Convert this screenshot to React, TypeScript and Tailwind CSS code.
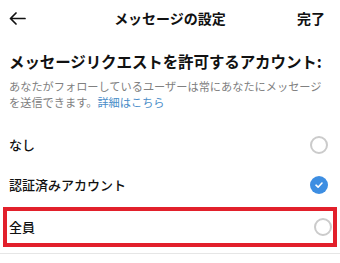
import { useState } from "react";

type Choice = "none" | "verified" | "everyone";

const options: { id: Choice; label: string }[] = [
  { id: "none", label: "なし" },
  { id: "verified", label: "認証済みアカウント" },
];

function Radio({ checked }: { checked: boolean }) {
  if (checked) {
    return (
      <span className="flex h-[18px] w-[18px] items-center justify-center rounded-full bg-[#3d8ee2]">
        <svg width="10" height="10" viewBox="0 0 10 10" fill="none">
          <path d="M2 5.2 L4.1 7.2 L8 3" stroke="white" strokeWidth="1.6" strokeLinecap="round" strokeLinejoin="round" />
        </svg>
      </span>
    );
  }
  return <span className="h-[18px] w-[18px] rounded-full border-[2px] border-[#cbcbcb]" />;
}

export default function App() {
  const [choice, setChoice] = useState<Choice>("verified");

  return (
    <div
      className="h-[263px] w-[340px] overflow-hidden bg-white text-[#111]"
      style={{ fontFamily: '"Noto Sans CJK JP", "Noto Sans", sans-serif' }}
    >
      {/* Header */}
      <div className="grid h-[36px] grid-cols-[1fr_auto_1fr] items-center px-[9px]">
        <svg width="17" height="13" viewBox="0 0 17 13" fill="none" className="justify-self-start">
          <path d="M16 6.5 H1.5 M7 1 L1.5 6.5 L7 12" stroke="#111" strokeWidth="1.7" strokeLinecap="round" strokeLinejoin="round" />
        </svg>
        <div className="text-[14px] font-bold leading-none">メッセージの設定</div>
        <div className="justify-self-end pr-[6px] text-[14px] font-bold leading-none">完了</div>
      </div>

      <div className="mt-[14px] px-[9px]">
        <h1 className="text-[15.5px] font-bold leading-[22px] tracking-[-0.1px]">
          メッセージリクエストを許可するアカウント:
        </h1>
        <p className="mt-[6px] text-[11.2px] leading-[16px] text-[#808080]">
          あなたがフォローしているユーザーは常にあなたにメッセージを送信できます。<span className="text-[#4a8dc8]">詳細はこちら</span>
        </p>
      </div>

      <div className="mt-[15px]">
        {options.map((o) => (
          <button
            key={o.id}
            onClick={() => setChoice(o.id)}
            className="flex h-[40px] w-full items-center justify-between pl-[9px] pr-[12px] text-left"
          >
            <span className="text-[13px] font-medium">{o.label}</span>
            <Radio checked={choice === o.id} />
          </button>
        ))}

        <div className="mx-[3px] mt-[2px] border-[4px] border-[#e2202b]">
          <button
            onClick={() => setChoice("everyone")}
            className="flex h-[32px] w-full items-center justify-between pl-[2px] pr-[1px] text-left"
          >
            <span className="text-[13px] font-medium">全員</span>
            <Radio checked={choice === "everyone"} />
          </button>
        </div>
        <div className="mt-[6px] h-px bg-[#e6e6e6]" />
      </div>
    </div>
  );
}
